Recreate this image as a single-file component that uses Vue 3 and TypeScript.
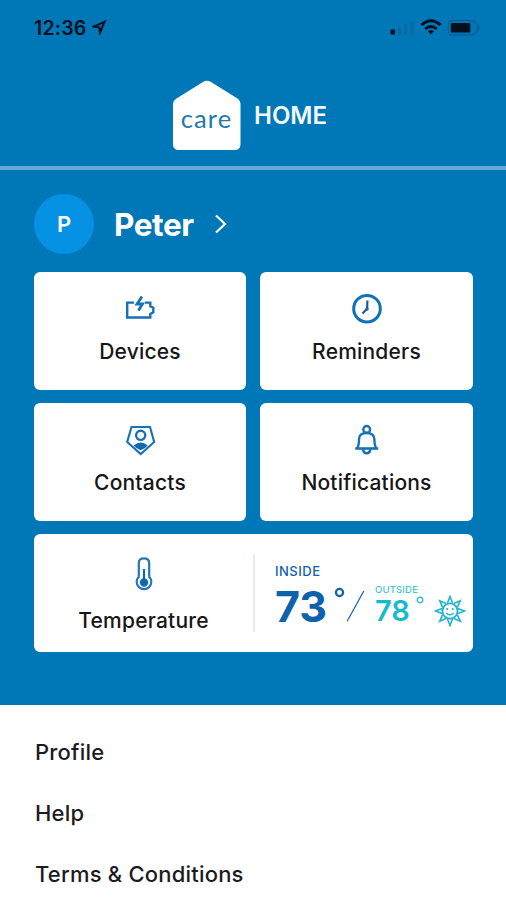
<script setup lang="ts">
interface Tile {
  id: 'devices' | 'reminders' | 'contacts' | 'notifications'
  label: string
}

const tiles: Tile[] = [
  { id: 'devices', label: 'Devices' },
  { id: 'reminders', label: 'Reminders' },
  { id: 'contacts', label: 'Contacts' },
  { id: 'notifications', label: 'Notifications' },
]

const links: string[] = ['Profile', 'Help', 'Terms & Conditions']
const rays: number[] = [0, 45, 90, 135, 180, 225, 270, 315]
</script>

<template>
  <div class="screen">
    <header class="top">
      <div class="status">
        <span class="time">12:36</span>
        <svg class="locate" width="15" height="15" viewBox="0 0 15 15">
          <path d="M1.600 6.600 L12.600 1.800 L8 12.700 L7.300 7.300 Z" />
        </svg>
        <svg class="indicators" width="92" height="20" viewBox="0 0 92 20">
          <rect x="0.500" y="11.500" width="4.600" height="5" rx="1.200" fill="#03111f" />
          <g fill="#0a68a3">
            <rect x="8" y="9" width="2.800" height="7.500" rx="1" />
            <rect x="14" y="6" width="2.800" height="10.500" rx="1" />
            <rect x="20.500" y="3" width="3" height="13.500" rx="1" />
          </g>
          <g fill="none" stroke="#03111f" stroke-width="2.800">
            <path d="M31.500 7 Q41 -1.400 50.500 7" />
            <path d="M35.200 11 Q41 6 46.800 11" />
          </g>
          <path d="M38 13.200 Q41 11 44 13.200 L41 16.500 Z" fill="#03111f" />
          <path d="M62.500 2.700 H84 L88.500 6.500 V12.500 L84 16.800 H62.500 Q59.500 16.800 59.500 13.800 V5.700 Q59.500 2.700 62.500 2.700 Z" transform="translate(-1 0)" fill="none" stroke="#075f99" stroke-width="1.200" />
          <path d="M87.800 6.500 Q91.500 9.500 87.800 12.500 Z" fill="#075f99" />
          <rect x="60.800" y="5" width="19.500" height="9.500" rx="1" fill="#03111f" />
        </svg>
      </div>
      <div class="brand">
        <div class="house">
          <svg width="68" height="71" viewBox="0 0 68 71">
            <path d="M30 2 Q34 -.5 38 2 L64.500 18.500 Q67.500 20.700 67.500 24.500 V64 Q67.500 70 61.500 70 H6 Q0 70 0 64 V24.500 Q0 20.700 3.500 18.500 Z" fill="#fff" />
          </svg>
          <span class="care">care</span>
        </div>
        <span class="home">HOME</span>
      </div>
    </header>

    <main class="panel">
      <div class="user">
        <span class="avatar">P</span>
        <span class="name">Peter</span>
        <svg width="14" height="22" viewBox="0 0 14 22">
          <path d="M2 2.500 L11 11 L2 19.500" fill="none" stroke="#fff" stroke-width="2.200" />
        </svg>
      </div>

      <div class="grid">
        <section v-for="tile in tiles" :key="tile.id" class="tile">
          <svg v-if="tile.id === 'devices'" class="icon" width="34" height="34" viewBox="0 0 34 34">
            <path d="M11 10.600 H4.200 V25.500 H27.300 V22 L30.300 20.300 V15.800 L27.300 14.200 V10.600 H22" fill="none" stroke="#1670b5" stroke-width="2.400" />
            <path d="M19 4.500 L14 12 H19.500 L15.500 18.500" fill="none" stroke="#1670b5" stroke-width="2.800" />
          </svg>
          <svg v-else-if="tile.id === 'reminders'" class="icon" width="34" height="34" viewBox="0 0 34 34">
            <circle cx="17" cy="16.700" r="13.300" fill="none" stroke="#1171b5" stroke-width="3" />
            <path d="M17.400 8.500 L17.100 16.800 L12.500 21.500" fill="none" stroke="#28529c" stroke-width="2.200" />
            <circle cx="17" cy="17" r="1.700" fill="#1268ae" />
          </svg>
          <svg v-else-if="tile.id === 'contacts'" class="icon" width="34" height="34" viewBox="0 0 34 34">
            <path d="M8.500 4 H27 L31.200 19 L17.700 31 L4.200 19 Z" fill="none" stroke="#1672b5" stroke-width="2.100" />
            <circle cx="17.700" cy="12.300" r="4.600" fill="none" stroke="#1672b5" stroke-width="2.400" />
            <path d="M10.700 22.400 Q17.700 16.800 24.700 22.400 Q22 25.800 17.700 27.200 Q13.200 25.800 10.700 22.400 Z" fill="#1268ae" />
          </svg>
          <svg v-else class="icon" width="34" height="34" viewBox="0 0 34 34">
            <g fill="none" stroke="#1672b5" stroke-width="2.400">
              <circle cx="16.700" cy="6.400" r="3.400" />
              <path d="M7.200 25 Q9 22.500 9 16.500 Q9 10 16.700 10 Q24.400 10 24.400 16.500 Q24.400 22.500 26.200 25" />
              <path d="M5.300 25.500 H28.200" stroke-width="2.600" />
              <path d="M13 26 Q13.500 30.200 16.700 30.200 Q19.900 30.200 20.400 26" />
            </g>
          </svg>
          <span class="label" :class="tile.id">{{ tile.label }}</span>
        </section>

        <section class="tile wide">
          <div class="climate">
            <svg width="24" height="38" viewBox="0 0 24 38">
              <path d="M6.800 7 Q6.800 2.300 12 2.300 Q17.200 2.300 17.200 7 V20.800 A7.300 7.300 0 1 1 6.800 20.800 Z" fill="none" stroke="#2577b9" stroke-width="2.200" />
              <path d="M12 13 V24" stroke="#1268ae" stroke-width="2.200" />
              <circle cx="12" cy="26.500" r="4.200" fill="#1268ae" />
            </svg>
            <span class="label temperature">Temperature</span>
          </div>
          <div class="readings">
            <div class="inside">
              <span class="cap">INSIDE</span>
              <div class="value">
                <span class="num">73</span>
                <svg width="12" height="12" viewBox="0 0 12 12"><circle cx="5.500" cy="6.500" r="3.600" fill="none" stroke="#0e62ac" stroke-width="2.300" /></svg>
              </div>
            </div>
            <svg class="slash" width="20" height="34" viewBox="0 0 20 34">
              <path d="M0 31.500 L16.800 1" stroke="#1c65ad" stroke-width="1.300" />
            </svg>
            <div class="outside">
              <span class="cap">OUTSIDE</span>
              <div class="value">
                <span class="num">78</span>
                <svg width="8" height="8" viewBox="0 0 8 8"><circle cx="4" cy="4" r="2.800" fill="none" stroke="#28bdce" stroke-width="1.300" /></svg>
              </div>
            </div>
            <svg class="sun" width="32" height="32" viewBox="0 0 32 32">
              <circle cx="16" cy="16" r="7.600" fill="none" stroke="#20b5ce" stroke-width="1.900" />
              <path v-for="a in rays" :key="a" d="M13.500 8 L16 1.500 L18.500 8" fill="none" stroke="#20b5ce" stroke-width="1.600" :transform="`rotate(${a} 16 16)`" />
              <path d="M12.300 18 Q16 21.500 19.700 18" fill="none" stroke="#20b5ce" stroke-width="1.300" />
              <circle cx="13.200" cy="14" r="1.100" fill="#20b5ce" />
              <circle cx="18.800" cy="14" r="1.100" fill="#20b5ce" />
            </svg>
          </div>
        </section>
      </div>
    </main>

    <nav class="links">
      <a v-for="link in links" :key="link">{{ link }}</a>
    </nav>
  </div>
</template>

<style>
body {
  margin: 0;
}
</style>

<style scoped>
.screen {
  width: 506px;
  height: 900px;
  overflow: hidden;
  background: #fff;
  font-family: Inter, "Liberation Sans", sans-serif;
  color: #161616;
}

.screen span,
.links a {
  white-space: nowrap;
}

.screen svg {
  display: block;
  flex: none;
}

.top {
  box-sizing: border-box;
  height: 170px;
  background: #0077b6;
  border-bottom: 4px solid #62acd5;
}

.status {
  display: flex;
  align-items: center;
  height: 55px;
  padding: 0 24px 0 34px;
}

.time {
  font-size: 19.5px;
  font-weight: 600;
  letter-spacing: 0.2px;
  color: #03111f;
}

.locate {
  margin-left: 5px;
  fill: none;
  stroke: #03111f;
  stroke-width: 2;
}

.indicators {
  margin-left: auto;
}

.brand {
  display: flex;
  align-items: center;
  gap: 13px;
  margin: 25px 0 0 173px;
}

.house {
  display: grid;
  justify-items: center;
  align-items: center;
}

.house > * {
  grid-area: 1 / 1;
}

.care {
  padding: 4px 1px 0 0;
  font-family: Lato, sans-serif;
  font-size: 25.5px;
  letter-spacing: 1.1px;
  line-height: 30px;
  color: #2478ac;
}

.home {
  font-size: 24px;
  font-weight: 600;
  line-height: 30px;
  color: #f4faff;
}

.panel {
  box-sizing: border-box;
  height: 535px;
  padding: 24px 33px 0 34px;
  background: #0077b6;
}

.user {
  display: flex;
  align-items: center;
  height: 60px;
}

.avatar {
  display: flex;
  align-items: center;
  justify-content: center;
  width: 60px;
  height: 60px;
  border-radius: 50%;
  background: #0692e4;
  font-size: 22px;
  font-weight: 600;
  color: #fff;
}

.name {
  width: 100px;
  margin-left: 20px;
  font-size: 31.5px;
  font-weight: 700;
  letter-spacing: -0.4px;
  color: #fff;
}

.grid {
  display: grid;
  grid-template-columns: 212px 213px;
  grid-template-rows: 118px 118px 118px;
  gap: 13px 14px;
  margin-top: 18px;
}

.tile {
  display: flex;
  flex-direction: column;
  align-items: center;
  box-sizing: border-box;
  padding-top: 20px;
  border-radius: 6px;
  background: #fff;
}

.label {
  margin-top: 12px;
  font-size: 21px;
  font-weight: 500;
  line-height: 28px;
  letter-spacing: 0.2px;
}

.wide {
  grid-column: 1 / -1;
  flex-direction: row;
  align-items: flex-start;
}

.climate {
  display: flex;
  flex-direction: column;
  align-items: center;
  width: 219px;
  margin-top: 2px;
}

.temperature {
  margin-top: 13px;
}

.readings {
  display: flex;
  align-items: flex-start;
  height: 78px;
  padding-left: 20px;
  border-left: 2px solid #dfedf7;
}

.inside {
  width: 72px;
  padding-top: 9px;
  color: #0e62ac;
}

.cap {
  display: block;
}

.inside .cap {
  font-size: 13px;
  font-weight: 500;
  line-height: 16px;
  letter-spacing: 0.5px;
}

.value {
  display: flex;
  align-items: flex-start;
}

.inside .num {
  width: 59px;
  font-size: 43px;
  font-weight: 700;
  line-height: 55px;
}

.inside .value svg {
  margin-top: 7px;
}

.slash {
  margin-top: 36px;
}

.outside {
  width: 59px;
  margin-left: 8px;
  padding-top: 31px;
  color: #16bccb;
}

.outside .cap {
  font-size: 9.5px;
  line-height: 10px;
  letter-spacing: 0.2px;
}

.outside .num {
  width: 41px;
  font-size: 29px;
  font-weight: 600;
  line-height: 32px;
}

.outside .value svg {
  margin-top: 1px;
}

.sun {
  margin-top: 41px;
}

.links {
  display: flex;
  flex-direction: column;
  gap: 31px;
  padding: 32px 0 0 35px;
}

.links a {
  font-size: 22px;
  font-weight: 500;
  line-height: 30px;
  letter-spacing: 0.2px;
  color: #1c1c1e;
}
</style>
